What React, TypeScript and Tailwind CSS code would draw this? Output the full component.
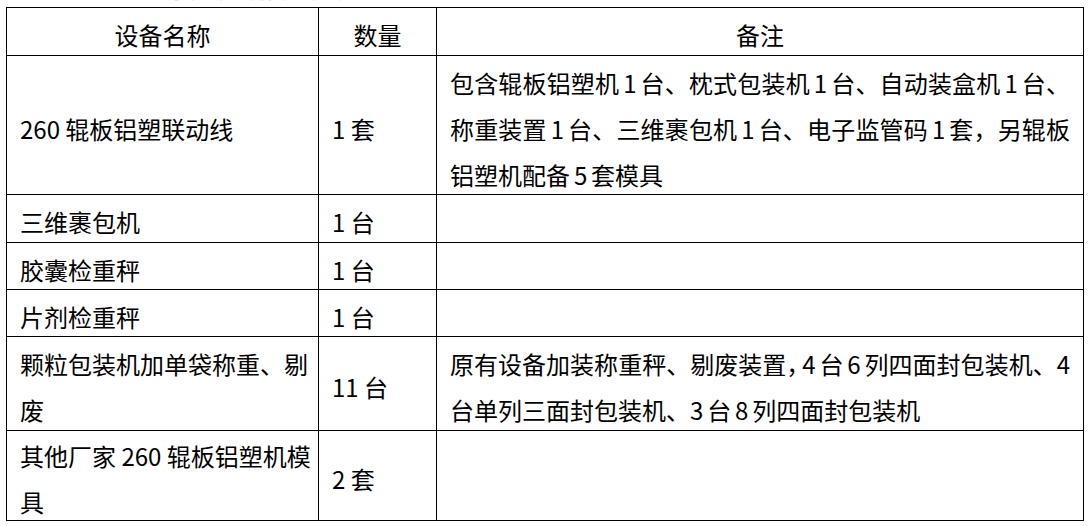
import React from "react";

const J = "[text-align-last:justify] text-justify";

function Lines({ lines, tight }: { lines: React.ReactNode[]; tight?: boolean }) {
  return (
    <div className="-mb-[7px]">
      {lines.map((l, i) => (
        <div
          key={i}
          className={`whitespace-nowrap ${tight ? "[word-spacing:-1.5px]" : ""} ${
            i < lines.length - 1 ? J : ""
          }`}
        >
          {l}
        </div>
      ))}
    </div>
  );
}

export default function App() {
  const td = "border border-black align-middle px-[13px] py-0";
  return (
    <div
      className="w-[1092px] h-[526px] bg-white text-black overflow-hidden"
      style={{ fontFamily: '"Noto Sans CJK SC", "Noto Sans", sans-serif' }}
    >
      <div className="h-[7px] overflow-hidden pl-[150px]">
        <div className="-mt-[24px] text-[23px] leading-[24px] text-[#c8c8c8] whitespace-nowrap">
          主要生产设备一览表
        </div>
      </div>
      <div className="pl-[6px]">
        <table className="border-collapse table-fixed w-[1077px] text-[24px] leading-[46px]">
          <colgroup>
            <col className="w-[312px]" />
            <col className="w-[118px]" />
            <col className="w-[647px]" />
          </colgroup>
          <tbody>
            <tr className="h-[48px]">
              <td className={`${td} text-center`}>
                <Lines lines={["设备名称"]} />
              </td>
              <td className={`${td} text-center`}>
                <Lines lines={["数量"]} />
              </td>
              <td className={`${td} text-center`}>
                <Lines lines={["备注"]} />
              </td>
            </tr>
            <tr className="h-[139px]">
              <td className={td}>
                <Lines lines={["260 辊板铝塑联动线"]} />
              </td>
              <td className={td}>
                <Lines lines={["1 套"]} />
              </td>
              <td className={td}>
                <Lines
                  tight
                  lines={[
                    "包含辊板铝塑机 1 台、枕式包装机 1 台、自动装盒机 1 台、",
                    "称重装置 1 台、三维裹包机 1 台、电子监管码 1 套，另辊板",
                    "铝塑机配备 5 套模具",
                  ]}
                />
              </td>
            </tr>
            <tr className="h-[48px]">
              <td className={td}>
                <Lines lines={["三维裹包机"]} />
              </td>
              <td className={td}>
                <Lines lines={["1 台"]} />
              </td>
              <td className={td}></td>
            </tr>
            <tr className="h-[47px]">
              <td className={td}>
                <Lines lines={["胶囊检重秤"]} />
              </td>
              <td className={td}>
                <Lines lines={["1 台"]} />
              </td>
              <td className={td}></td>
            </tr>
            <tr className="h-[47px]">
              <td className={td}>
                <Lines lines={["片剂检重秤"]} />
              </td>
              <td className={td}>
                <Lines lines={["1 台"]} />
              </td>
              <td className={td}></td>
            </tr>
            <tr className="h-[94px]">
              <td className={td}>
                <Lines lines={["颗粒包装机加单袋称重、剔", "废"]} />
              </td>
              <td className={td}>
                <Lines lines={["11 台"]} />
              </td>
              <td className={td}>
                <Lines
                  tight
                  lines={[
                    <>
                      原有设备加装称重秤、剔废装置
                      <span className="[font-feature-settings:'halt']">，</span> 4 台 6 列四面封包装机、4
                    </>,
                    "台单列三面封包装机、3 台 8 列四面封包装机",
                  ]}
                />
              </td>
            </tr>
            <tr className="h-[90px]">
              <td className={td}>
                <Lines lines={["其他厂家 260 辊板铝塑机模", "具"]} />
              </td>
              <td className={td}>
                <Lines lines={["2 套"]} />
              </td>
              <td className={td}></td>
            </tr>
          </tbody>
        </table>
      </div>
    </div>
  );
}
